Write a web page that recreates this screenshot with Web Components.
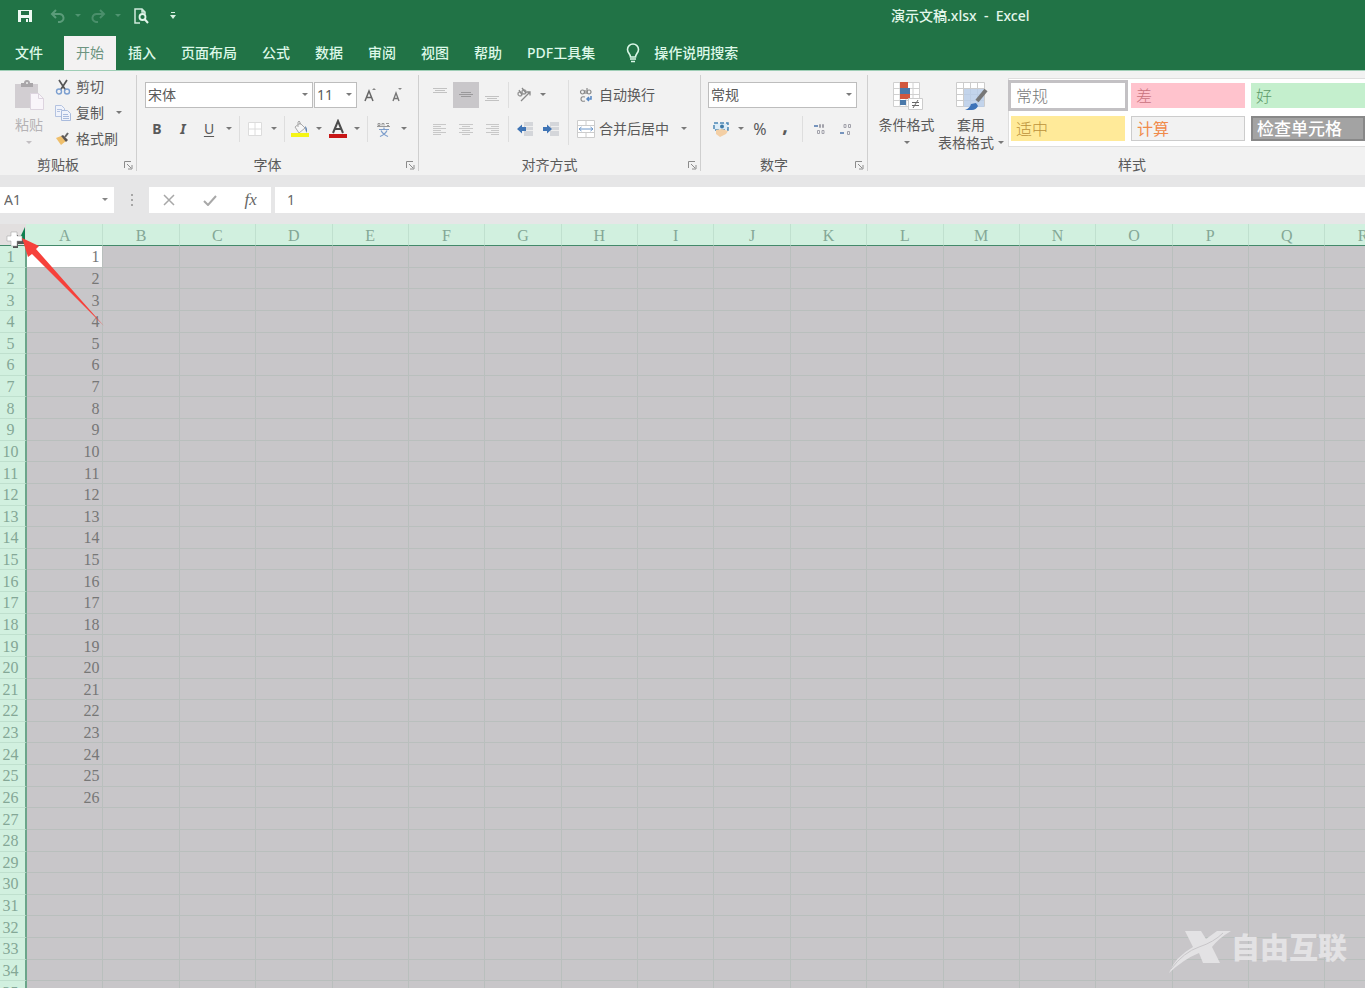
<!DOCTYPE html>
<html lang="zh-CN">
<head>
<meta charset="utf-8">
<title>演示文稿.xlsx - Excel</title>
<style>
  html, body { margin: 0; height: 100%; }
  body { font: 14px/18px "Noto Sans", "Noto Sans CJK SC", sans-serif; color: #5a5a5a; overflow: hidden; }
</style>
</head>
<body>
<excel-app></excel-app>
<script>
const ICONS = {
  save: [16, 14, '<path fill="#eefaf3" d="M1 1h14v12H1z"/><path fill="#217346" d="M4 2h8v4H4zM4 9h8v4H4z"/><path fill="#eefaf3" d="M9 10h2v3H9z"/>'],
  undo: [16, 14, '<path fill="none" stroke="#5b9c7a" stroke-width="2" d="M6 1 2 5l4 4M2 5h7a4 4 0 0 1 1 8H8"/>'],
  redo: [16, 14, '<path fill="none" stroke="#4a8f6b" stroke-width="2" d="m10 1 4 4-4 4M14 5H7a4 4 0 0 0-1 8h2"/>'],
  preview: [16, 16, '<path fill="none" stroke="#cfeadb" stroke-width="1.5" d="M7 15H2V1h7l3 3v2M9 1v3h3"/><circle cx="9.500" cy="9" r="3" fill="none" stroke="#e2f5ea" stroke-width="1.800"/><path stroke="#e2f5ea" stroke-width="2" d="m11.500 11 3.500 4"/>'],
  more: [8, 8, '<path fill="#d9f0e3" d="M2 0h4v1H2zM1 3h6L4 7z"/>'],
  bulb: [16, 20, '<path fill="none" stroke="#d9f7e6" stroke-width="1.600" d="M5.500 14c0-3-3-4-3-7.500a5.500 5.500 0 0 1 11 0c0 3.500-3 4.500-3 7.500z"/><path stroke="#d9f7e6" stroke-width="1.500" d="M5 16h6M6 18.500h4"/>'],
  caret: [6, 4, '<path fill="currentColor" fill-opacity=".8" d="M0 0h6L3 3z"/>'],
  launcher: [9, 9, '<path fill="none" stroke="#8c8c8c" d="M.5 7V.5H7M3 3l4 4M8 4v4H4"/>'],
  paste: [32, 32, '<path fill="#d2ced2" d="M2 4h23v24H2z"/><path fill="#a9a6a9" d="M8 3h3q0-3 3-3t3 3h3v4H8z"/><circle cx="14" cy="3" r="1" fill="#eee"/><path fill="#f9f5fa" stroke="#ddd4df" d="M17.500 13.500h8l5 5v11h-13z"/><path fill="none" stroke="#ddd4df" d="M25.500 13.500v5h5"/>'],
  cut: [16, 16, '<path stroke="#555" stroke-width="1.700" d="m4 1 6.500 10M12 1 5.500 11"/><circle cx="4" cy="12.500" r="2.500" fill="none" stroke="#7c9fd0" stroke-width="1.400"/><circle cx="12" cy="12.500" r="2.500" fill="none" stroke="#7c9fd0" stroke-width="1.400"/>'],
  copy: [18, 18, '<path fill="#f0f3fb" stroke="#b4c3e0" d="M1.500 1.500h6l3 3v8h-9z"/><path stroke="#b4c3e0" d="M3 5.500h5M3 7.500h3"/><path fill="#f0f3fb" stroke="#a9bbdd" d="M7.500 6.500h6l3 3v7h-9z"/><path stroke="#a9bbdd" d="M9 10.500h5M9 12.500h6M9 14.500h6"/>'],
  brush: [16, 14, '<path fill="#efbf6c" d="m1 6 5-2 5 5-5 4z"/><path fill="#5c5550" d="m6 4 2-1 5 5-2 2z"/><path stroke="#666" stroke-width="2" d="m10 5 3-4"/>'],
  growA: [16, 16, '<path fill="none" stroke="#666" stroke-width="1.500" d="M3 14 7 4l4 10M4.500 10.500h5"/><path fill="#888" d="m10 3 2-2 2 2z"/>'],
  shrinkA: [16, 16, '<path fill="none" stroke="#777" stroke-width="1.400" d="M5 14l3-8 3 8M6 11.500h4"/><path fill="#888" d="m10 1 2 2 2-2z"/>'],
  borders: [16, 16, '<path fill="#fff" stroke="#dcdcdc" d="M1.500 1.500h13v13h-13zM8 1v14M1 8h14"/>'],
  fill: [20, 18, '<path fill="#f7f7f7" stroke="#aaa" d="m5 7 5-4 5 5-6 5z"/><path fill="none" stroke="#aaa" d="M8 7V2q1-2 2 0v3"/><path fill="#5a7fae" d="M15 6q3 2 1.500 7l-1-3z"/><path fill="#f5f516" d="M1 13h18v4H1z"/>'],
  fontColor: [20, 20, '<path fill="none" stroke="#4c4c4c" stroke-width="2" d="m5 14 5-12 5 12M7 10h6"/><path fill="#c81616" d="M1 15h18v4H1z"/>'],
  phonetic: [16, 18, '<path fill="none" stroke="#999" d="M2 3.500h2v2H2zM6 5.500v-2h2v2M10 3.500h3M11 5.500h2M1 6.500h13"/><path fill="none" stroke="#7c9dcb" stroke-width="1.200" d="M3 9.500h10M8 7.500v2M5 10.500q2 4 7 6M11 10.500q-2 4-7 6"/>'],
  top: [14, 16, '<path stroke="#c2c2c2" d="M0 1.500h14M2 3.500h10M0 5.500h14"/>'],
  middle: [14, 16, '<path stroke="#9a999b" d="M2 5.500h10M0 7.500h14M2 9.500h10"/>'],
  bottom: [14, 16, '<path stroke="#c2c2c2" d="M0 9.500h14M2 11.500h10M0 13.500h14"/>'],
  left: [14, 14, '<path stroke="#c8c8c8" d="M0 2.500h13M0 4.500h8M0 6.500h13M0 8.500h8M0 10.500h13M0 12.500h8"/>'],
  center: [14, 14, '<path stroke="#c8c8c8" d="M0 2.500h14M3 4.500h8M0 6.500h14M3 8.500h8M0 10.500h14M3 12.500h8"/>'],
  right: [14, 14, '<path stroke="#c8c8c8" d="M1 2.500h13M6 4.500h8M1 6.500h13M6 8.500h8M1 10.500h13M6 12.500h8"/>'],
  orient: [16, 16, '<circle cx="4" cy="7" r="2" fill="none" stroke="#999" stroke-width="1.300"/><circle cx="8" cy="5" r="2" fill="none" stroke="#999" stroke-width="1.300"/><path fill="none" stroke="#888" stroke-width="1.300" d="m3 3 3 5M6 1l4 5M5 14 14 5M10.500 5H14v3.500"/>'],
  outdent: [18, 14, '<path fill="#d4d6da" d="M8 0h9v14H8z"/><path stroke="#eee" d="M9 4.500h8M9 8.500h8"/><path fill="#3f74b5" d="m1 7 5-4.500V5h4v4H6v2.500z"/>'],
  indent: [18, 14, '<path fill="#d4d6da" d="M8 0h9v14H8z"/><path stroke="#eee" d="M9 4.500h8M9 8.500h8"/><path fill="#3f74b5" d="M10 7 5 2.500V5H1v4h4v2.500z"/>'],
  wrap: [14, 16, '<circle cx="3.500" cy="5" r="2" fill="none" stroke="#888" stroke-width="1.200"/><path fill="none" stroke="#888" stroke-width="1.200" d="M6 3v4M8 1v6"/><circle cx="10" cy="5" r="2" fill="none" stroke="#888" stroke-width="1.200"/><path fill="none" stroke="#888" stroke-width="1.200" d="M6 10q-4-1-4 2t4 2"/><path fill="none" stroke="#5687c3" stroke-width="1.500" d="M12 9v3H8M10 10l-2 2 2 2"/>'],
  merge: [18, 18, '<path fill="#fff" stroke="#ccc" d="M.5.500h17v17H.5zM9 0v5M9 13v5M1 5.500h16M1 12.500h16"/><path fill="none" stroke="#6b96ca" d="M2 9h14M4.500 7 2 9l2.500 2M13.500 7 16 9l-2.500 2"/>'],
  money: [18, 18, '<path fill="#dcecf7" stroke="#4b87b5" stroke-dasharray="4 2" stroke-width="1.500" d="M2 3h14v7H2z"/><circle cx="10" cy="6.500" r="2" fill="#3e79a6"/><path fill="#f3cfa5" d="m4 10 6-1 6 2-2 3-6 3-4-3z"/>'],
  incDec: [14, 16, '<path stroke="#7694bd" stroke-width="2" d="M2 5h4"/><path fill="none" stroke="#a2a2ab" d="M7.500 3.500h1v3h-1zM10.500 3.500h1v3h-1zM5.500 9.500h2v3h-2zM10 9.500h2v3h-2z"/>'],
  decDec: [14, 16, '<path stroke="#7694bd" stroke-width="2" d="M2 12h4"/><path fill="none" stroke="#a2a2ab" d="M6 3.500h2v3H6zM10.500 3.500h2v3h-2zM9.500 10.500h2v3h-2z"/>'],
  conditional: [32, 32, '<path fill="#fff" stroke="#d0d0d0" d="M2.500 2.500h26v24h-26zM9 2v25M15 2v25M22 2v25M2 8.500h26M2 14.500h26M2 20.500h26"/><path fill="#d1583f" d="M9 2h8v6H9zM9 14h10v5H9z"/><path fill="#4a79aa" d="M9 8h10v6H9zM9 20h6v5H9z"/><path fill="#fff" stroke="#ccc" d="M17.500 18.500h14v11h-14z"/><path fill="none" stroke="#666" d="M21 22.500h7M21 25.500h7M27 20l-5 8"/>'],
  tableStyle: [34, 32, '<path fill="#fff" stroke="#ccc" d="M2.500 2.500h28v24h-28zM9.500 2v25M16.500 2v25M23.500 2v25M2 8.500h28M2 14.500h28M2 20.500h28"/><path fill="#b8cde8" fill-opacity=".85" d="M10 9h20v18H10z"/><path stroke="#777" stroke-width="4" d="m32 10-9 11"/><path fill="#3e73b8" d="M11 30q5-2 6-6l5-1 2 3q-2 4-6 4z"/>'],
  cancel: [12, 12, '<path stroke="#a8a8a8" stroke-width="1.500" d="m1 1 10 10M11 1 1 11"/>'],
  accept: [14, 12, '<path fill="none" stroke="#a8a8a8" stroke-width="2" d="m1 7 4 4 8-9"/>'],
  dots: [4, 14, '<path fill="#a6a6a6" d="M1 1h2v2H1zM1 6h2v2H1zM1 11h2v2H1z"/>']
};
const svg = name => {
  const [w, h, body] = ICONS[name];
  return `<svg width="${w}" height="${h}" viewBox="0 0 ${w} ${h}" aria-hidden="true">${body}</svg>`;
};
const RESET = `:host,*{box-sizing:border-box} svg{display:block;flex:none} button{font:inherit;color:inherit;border:0;padding:0;margin:0;background:none;white-space:nowrap}`;

function define(name, render) {
  customElements.define(name, class extends HTMLElement {
    connectedCallback() {
      if (this.shadowRoot) return;
      const t = document.createElement('template');
      t.innerHTML = render(this);
      this.attachShadow({ mode: 'open' }).append(t.content.cloneNode(true));
    }
  });
}

/* Small command: an icon and/or slotted text */
define('tool-button', el => `<style>${RESET}
  :host{display:flex;width:26px;height:26px;flex:none}
  :host([size=caret]){width:14px}
  :host([size=narrow]){width:24px}
  :host([size=text]){width:auto}
  :host([pressed]){background:#c9c7ca}
  button{display:flex;width:100%;align-items:center;justify-content:center}
  .i{display:flex;justify-content:center;width:26px;flex:none}
  :host([size=caret]) .i,:host([size=narrow]) .i{width:100%}
  </style><button${el.hasAttribute('label') ? ` aria-label="${el.getAttribute('label')}"` : ''}>${el.getAttribute('icon') ? `<span class="i">${svg(el.getAttribute('icon'))}</span>` : ''}<slot></slot></button>`);

/* Tall command: icon above slotted label lines */
define('large-button', el => `<style>${RESET}
  :host{display:block;flex:none;width:64px}
  button{display:flex;flex-direction:column;align-items:center;width:100%;line-height:18px}
  .i{height:36px}
  .c{height:18px;display:grid;place-items:center}
  </style><button><span class="i">${svg(el.getAttribute('icon'))}</span><slot></slot>${el.hasAttribute('menu') ? `<span class="c">${svg('caret')}</span>` : ''}</button>`);

define('combo-box', el => `<style>${RESET}
  :host{display:grid;height:26px;align-items:center;flex:none}
  select,svg{grid-area:1/1}
  select{appearance:none;width:100%;height:26px;border:1px solid #bdbdbd;border-radius:0;background:#fff;font:inherit;color:inherit;padding:0 2px}
  svg{justify-self:end;margin-right:5px;pointer-events:none}
  </style><select aria-label="${el.getAttribute('label')}"><option>${el.getAttribute('value')}</option></select>${svg('caret')}`);

define('tool-separator', () => `<style>:host{display:block;width:1px;margin:0 3px;background:#dedede;align-self:stretch;flex:none}</style>`);

define('ribbon-group', el => `<style>${RESET}
  :host{display:flex;flex-direction:column;flex:none;height:104px;position:relative;border-right:1px solid transparent}
  :host::after{content:"";position:absolute;right:-1px;top:4px;bottom:4px;width:1px;background:#cfcfcf}
  .body{display:flex;height:84px}
  footer{display:flex;align-items:center;height:20px}
  h2{font:inherit;margin:0;flex:1;text-align:center}
  button{width:20px;padding-left:8px}
  </style><div class="body"><slot></slot></div><footer><h2>${el.getAttribute('name')}</h2>${el.hasAttribute('launcher') ? `<button aria-label="${el.getAttribute('name')}">${svg('launcher')}</button>` : ''}</footer>`);

define('style-gallery', () => `<style>${RESET}
  :host{display:block;margin:7px 0 0 5px}
  .g{display:grid;grid-template-columns:repeat(3,114px);gap:7px 6px;background:#fff;border:1px solid #dedede;padding:4px 2px;height:69px}
  button{height:25px;text-align:left;padding:0 5px;font-size:16px;line-height:24px;font-weight:300}
  .n{background:#fff;outline:3px solid #c3c1c4;color:#777}
  .bad{background:#ffc3cd;color:#c9727d}.good{background:#c4efcd;color:#5d9a68}
  .mid{background:#ffea99;color:#bc923a}.calc{background:#f2f2f2;border:1px solid #ccc;color:#f08b4b;font-weight:400;line-height:22px}
  .check{background:#a3a3a3;border:2px solid #888;color:#fff;font-weight:500;line-height:20px;padding:0 4px;font-size:17px}
  </style><div class="g"><button class="n">常规</button><button class="bad">差</button><button class="good">好</button><button class="mid">适中</button><button class="calc">计算</button><button class="check">检查单元格</button></div>`);

define('title-bar', () => `<style>${RESET}
  :host{display:flex;align-items:center;height:36px;padding:0 0 5px 12px;background:#217346;color:#e3f7eb;font-weight:500}
  tool-button{color:#5b9c7a}
  nav{display:flex;align-items:center;width:879px;flex:none}
  .undo{margin-left:7px}.preview{margin-left:3px}.more{margin-left:12px}
  span{white-space:pre}
  </style><nav><tool-button icon="save" label="保存"></tool-button><tool-button class="undo" icon="undo" label="撤消"></tool-button><tool-button size="caret" icon="caret" label="撤消选项"></tool-button><tool-button icon="redo" label="恢复"></tool-button><tool-button size="caret" icon="caret" label="恢复选项"></tool-button><tool-button class="preview" icon="preview" label="打印预览"></tool-button><tool-button class="more" size="caret" icon="more" label="自定义"></tool-button></nav><span>演示文稿.xlsx  -  Excel</span>`);

define('ribbon-tabs', () => `<style>${RESET}
  :host{display:flex;height:34px;background:#217346;color:#ddf8e8;font-weight:500;padding-left:15px}
  button{height:34px;margin-right:25px}
  .file{margin-right:21px}
  .on{width:52px;background:#f3f2f2;color:#6d9480;margin-right:12px;font-weight:400}
  .tell{display:flex;align-items:center;gap:13px;margin:0 0 0 5px}
  </style><button class="file">文件</button><button class="on">开始</button>${['插入','页面布局','公式','数据','审阅','视图','帮助','PDF工具集'].map(t => `<button>${t}</button>`).join('')}<button class="tell">${svg('bulb')}操作说明搜索</button>`);

define('ribbon-panel', () => `<style>${RESET}
  :host{display:flex;height:105px;background:#f2f2f2;border-top:1px solid #9fceb6;overflow:hidden}
  .col{display:flex;flex-direction:column;align-items:flex-start}
  .row{display:flex;height:26px}
  .rows{display:flex;flex-direction:column;gap:8px;padding-top:11px}
  .clip{width:137px}.clip large-button{width:52px;margin:9px 0 0 3px;color:#b5b2b5}
  .clip .col{padding-top:3px;margin-left:-5px}
  .clip .caret{margin-left:8px}
  .font{width:282px}.font .rows{padding-left:7px}
  .font .name{width:168px;margin:0 1px}.font .size{width:43px}
  .align{width:282px}.align .rows:first-child{padding-left:8px}
  .align .long{margin:9px 4px 10px 4px}
  .align .last{margin-left:8px}
  .mid{width:52px}.mid .orient{width:24px}
  .num{width:167px}.num .rows{padding-left:7px}.num combo-box{width:149px}
  .num tool-separator{margin:0 3px 0 4px}
  .styles{width:529px}.styles large-button{margin-top:9px}.styles .cf{width:65px;margin-left:6px}
  .tf{display:flex;align-items:center;gap:4px}
  b{font-weight:700}i{font-weight:700}u{text-underline-offset:2px}
  .pct{font-size:16px}.comma{font-size:20px;padding-bottom:8px}
  </style>
  <ribbon-group class="clip" name="剪贴板" launcher>
    <large-button icon="paste" menu><span>粘贴</span></large-button>
    <div class="col"><tool-button size="text" icon="cut">剪切</tool-button>
      <div class="row"><tool-button size="text" icon="copy">复制</tool-button><tool-button class="caret" size="caret" icon="caret" label="复制选项"></tool-button></div>
      <tool-button size="text" icon="brush">格式刷</tool-button></div>
  </ribbon-group>
  <ribbon-group class="font" name="字体" launcher><div class="rows">
    <div class="row"><combo-box class="name" label="字体" value="宋体"></combo-box><combo-box class="size" label="字号" value="11"></combo-box><tool-button icon="growA" label="增大字号"></tool-button><tool-button icon="shrinkA" label="减小字号"></tool-button></div>
    <div class="row"><tool-button><b>B</b></tool-button><tool-button><i>I</i></tool-button><tool-button><u>U</u></tool-button><tool-button size="caret" icon="caret" label="下划线选项"></tool-button><tool-separator></tool-separator><tool-button size="narrow" icon="borders" label="边框"></tool-button><tool-button size="caret" icon="caret" label="边框选项"></tool-button><tool-separator></tool-separator><tool-button size="narrow" icon="fill" label="填充颜色"></tool-button><tool-button size="caret" icon="caret" label="填充选项"></tool-button><tool-button size="narrow" icon="fontColor" label="字体颜色"></tool-button><tool-button size="caret" icon="caret" label="颜色选项"></tool-button><tool-separator></tool-separator><tool-button icon="phonetic" label="拼音"></tool-button><tool-button size="caret" icon="caret" label="拼音选项"></tool-button></div>
  </div></ribbon-group>
  <ribbon-group class="align" name="对齐方式" launcher>
    <div class="rows">
      <div class="row"><tool-button icon="top" label="顶端对齐"></tool-button><tool-button icon="middle" pressed label="垂直居中"></tool-button><tool-button icon="bottom" label="底端对齐"></tool-button><tool-separator></tool-separator><div class="row mid"><tool-button class="orient" size="narrow" icon="orient" label="方向"></tool-button><tool-button size="caret" icon="caret" label="方向选项"></tool-button></div></div>
      <div class="row"><tool-button icon="left" label="左对齐"></tool-button><tool-button icon="center" label="居中"></tool-button><tool-button icon="right" label="右对齐"></tool-button><tool-separator></tool-separator><tool-button icon="outdent" label="减少缩进"></tool-button><tool-button icon="indent" label="增加缩进"></tool-button></div>
    </div>
    <tool-separator class="long"></tool-separator>
    <div class="rows">
      <div class="row"><tool-button size="text" icon="wrap">自动换行</tool-button></div>
      <div class="row"><tool-button size="text" icon="merge">合并后居中</tool-button><tool-button class="last" size="caret" icon="caret" label="合并选项"></tool-button></div>
    </div>
  </ribbon-group>
  <ribbon-group class="num" name="数字" launcher><div class="rows">
    <combo-box label="数字格式" value="常规"></combo-box>
    <div class="row"><tool-button icon="money" label="会计格式"></tool-button><tool-button size="caret" icon="caret" label="会计选项"></tool-button><tool-button size="narrow"><span class="pct">%</span></tool-button><tool-button><b class="comma">,</b></tool-button><tool-separator></tool-separator><tool-button icon="incDec" label="增加小数位"></tool-button><tool-button icon="decDec" label="减少小数位"></tool-button></div>
  </div></ribbon-group>
  <ribbon-group class="styles" name="样式">
    <large-button class="cf" icon="conditional" menu><span>条件格式</span></large-button>
    <large-button icon="tableStyle"><span>套用</span><span class="tf">表格格式${svg('caret')}</span></large-button>
    <style-gallery></style-gallery>
  </ribbon-group>`);

define('formula-bar', () => `<style>${RESET}
  :host{display:flex;align-items:center;height:49px;background:#e6e6e7;color:#666}
  input{font:inherit;color:inherit;border:0;border-radius:0;background:#fff;height:26px;outline:0}
  .name{display:grid;align-items:center;width:114px}
  .name>*{grid-area:1/1}.name input{width:100%;padding:0 4px}.name button{justify-self:end;padding:8px 6px}
  .dots{width:35px;display:grid;place-items:center}
  .acts{display:flex;background:#fff;width:122px;height:26px;margin-right:4px}
  .acts button{flex:1;display:grid;place-items:center}
  .fx{font:italic 17px "Liberation Serif",serif}
  .value{flex:1;min-width:0;padding:0 12px}
  </style><div class="name"><input aria-label="名称框" value="A1"><button aria-label="名称">${svg('caret')}</button></div><div class="dots">${svg('dots')}</div><div class="acts"><button aria-label="取消">${svg('cancel')}</button><button aria-label="输入">${svg('accept')}</button><button class="fx">fx</button></div><input class="value" aria-label="编辑栏" value="1">`);

define('sheet-grid', () => {
  const cols = [...'ABCDEFGHIJKLMNOPQR'];
  const rows = Array.from({ length: 35 }, (_, r) => `<tr><th scope="row">${r + 1}</th>${cols.map((c, i) => `<td>${i === 0 && r < 26 ? r + 1 : ''}</td>`).join('')}</tr>`).join('');
  return `<style>${RESET}
  :host{display:block;flex:1;min-height:0;overflow:hidden;position:relative;background:#c8c6c9;font:16px/18px "Liberation Serif",serif;color:#777}
  table{border-collapse:separate;border-spacing:0;table-layout:fixed;width:1402px;height:779px}
  .h{width:27px}
  th,td{padding:2px 0 0;font-weight:400;overflow:hidden}
  thead th{height:22px;background:#d1f0df;color:#84a796;border-right:1px solid #c0e0cf;border-bottom:1px solid #43896a}
  thead th:first-child{background:#e2dfdf;border-right-color:#d1f0df}
  tbody th{background:#d1f0df;color:#84a796;border-right:2px solid #6ba58a;border-bottom:1px solid #bfe0ce;text-align:center;padding-right:4px}
  td{text-align:right;padding-right:3px;border-right:1px solid #b9bfbd;border-bottom:1px solid #b9bfbd}
  tbody tr:first-child td:nth-child(2){background:#fff}
  .over{position:absolute;left:0;top:0}
  </style><table><colgroup><col class="h"><col span="18"></colgroup><thead><tr><th></th>${cols.map(c => `<th scope="col">${c}</th>`).join('')}</tr></thead><tbody>${rows}</tbody></table>
  <svg class="over" width="110" height="106" viewBox="0 0 110 106" aria-hidden="true"><path fill="#0f8050" d="M25 3v17h-8z"/><path fill="#555" d="M13 11h5v3h5v6h-5v4h-5z"/><path fill="#fff" stroke="#999" stroke-width=".5" d="M11 8h6v4h5v5h-5v5h-6v-5H7v-5h4z"/><path fill="#f6413b" d="m22 14 17 8-3 3 68 77L32 30l-4 3z"/></svg>
  <brand-mark></brand-mark>`;
});

define('brand-mark', () => `<style>${RESET}
  :host{position:absolute;right:18px;bottom:15px;display:flex;align-items:flex-start;color:#e3e2e4;font:900 29px/34px "Noto Sans CJK SC",sans-serif}
  </style><svg width="63" height="44" viewBox="0 0 63 44" aria-hidden="true"><path fill="currentColor" d="M17 2h16l5 8L49 2h14q-12 7-19 16l8 16H35l-4-10q-15 6-30 20 6-16 24-26z"/><path fill="none" stroke="#c8c6c9" d="M3 40Q16 23 31 18 46 13 55 4"/></svg><span>自由互联</span>`);

define('excel-app', () => `<style>:host{display:flex;flex-direction:column;height:100vh;overflow:hidden}title-bar,ribbon-tabs,ribbon-panel,formula-bar{flex:none}</style>
  <title-bar></title-bar><ribbon-tabs></ribbon-tabs><ribbon-panel></ribbon-panel><formula-bar></formula-bar><sheet-grid></sheet-grid>`);
</script>
</body>
</html>
